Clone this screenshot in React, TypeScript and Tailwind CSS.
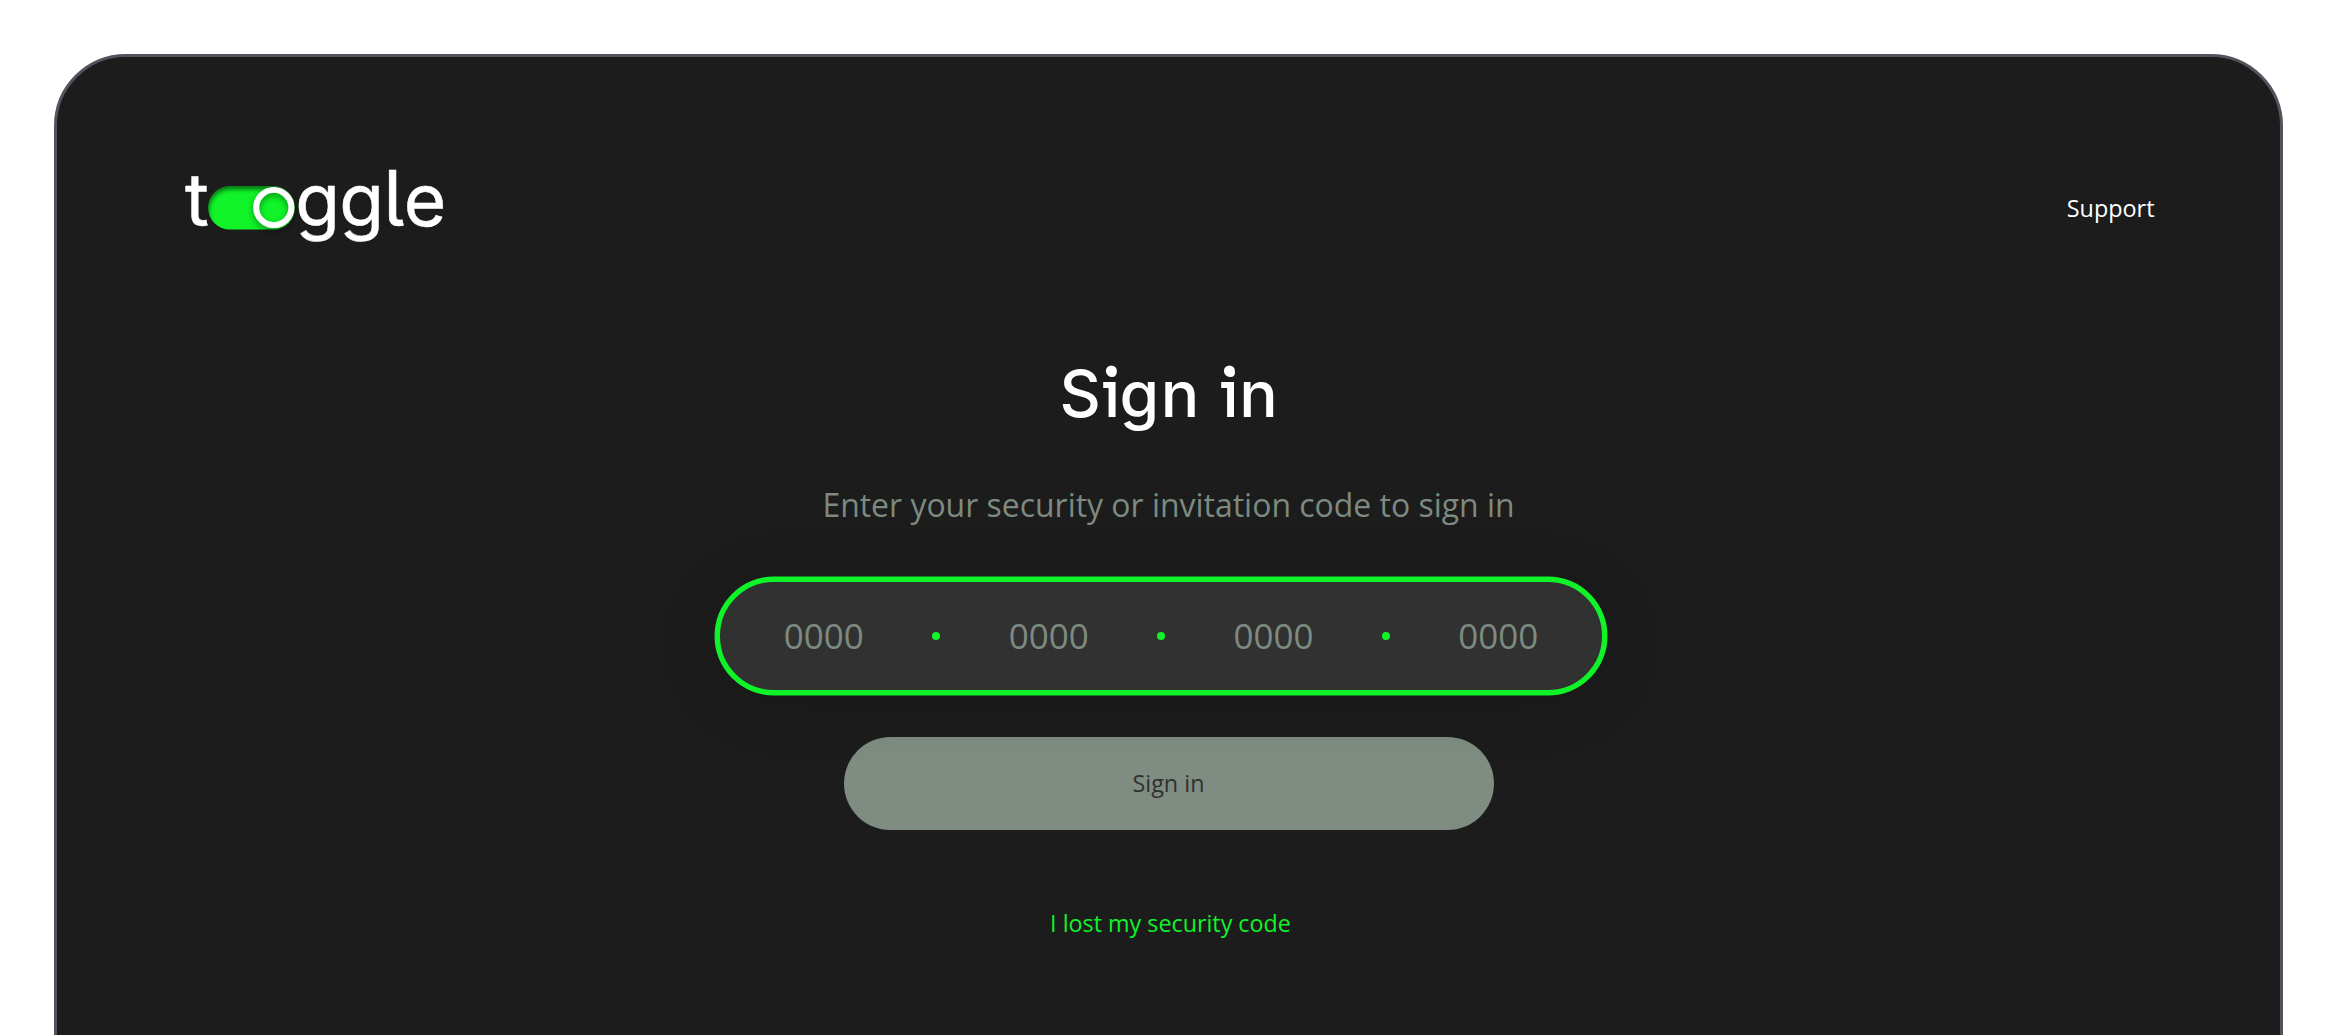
import React, { Fragment } from 'react';

const groups = ['0000', '0000', '0000', '0000'];

const Logo = () => {
  return (
    <svg width="270" height="96" viewBox="180 162 270 96" fill="none" className="block overflow-visible">
      <defs>
        <clipPath id="track">
          <rect x="208.2" y="186" width="86.8" height="43.6" rx="21.8" />
        </clipPath>
        <filter id="soft" x="-20%" y="-20%" width="140%" height="140%">
          <feGaussianBlur stdDeviation="2" />
        </filter>
        <filter id="knob" x="-40%" y="-40%" width="180%" height="180%">
          <feDropShadow dx="0" dy="3" stdDeviation="3" floodColor="#000" floodOpacity="0.4" />
        </filter>
      </defs>

      {/* Switch track with inner shadow */}
      <g clipPath="url(#track)">
        <rect x="208" y="186" width="88" height="44" fill="#0ff328" />
        <rect x="204.5" y="185" width="94" height="56" rx="26" stroke="#000" strokeOpacity="0.5" strokeWidth="9" filter="url(#soft)" />
      </g>
      <circle cx="273.8" cy="207.5" r="17.6" stroke="#fff" strokeWidth="5.9" filter="url(#knob)" />

      <g fill="#fff" stroke="#fff" strokeWidth="0.5" fontSize="73" className="font-['Inter',sans-serif] [font-feature-settings:'cv05'_1]">
        <text x="185" y="226.2">t</text>
        <text x="295.2 339.2" y="226.2">gg</text>
        <text x="383.2" y="226.2" fontSize="77">l</text>
        <text x="403.8" y="226.2">e</text>
      </g>
    </svg>
  );
};

const Title = () => {
  return (
    <h1>
      <svg width="237" height="90" viewBox="1050 350 237 90" fill="#fff" className="block overflow-visible">
        <text
          x="1059.4 1104.1 1119.6 1160.7 1200 1222.5 1239.2"
          y="416.7"
          fontSize="64"
          className="font-medium font-['Inter',sans-serif]"
        >
          Sign in
        </text>
        {/* Letter details: round dots and left spurs on both i's */}
        <circle cx="1111.4" cy="371" r="5.5" />
        <circle cx="1229.4" cy="371" r="5.5" />
        <rect x="1103.2" y="382" width="8" height="6" />
        <rect x="1221.2" y="382" width="8" height="6" />
      </svg>
    </h1>
  );
};

const App = () => {
  return (
    <div className="h-[1035px] w-full overflow-hidden bg-white px-[54px] pt-[54px] font-['Open_Sans',sans-serif]">
      <div className="h-[1100px] rounded-t-[72px] border-[3px] border-[#53535e] bg-[#1c1c1c]">
        <header className="flex items-start justify-between pl-[123px] pr-[125.5px] pt-[105px]">
          <Logo />
          <a href="#" className="mt-[26px] text-[23.4px] leading-[40px] text-white">
            Support
          </a>
        </header>

        <main className="flex flex-col items-center pt-[92px]">
          <Title />
          <p className="mt-[41px] text-[31.95px] leading-[48px] text-[#7c8a80]">
            Enter your security or invitation code to sign in
          </p>

          {/* Code field */}
          <div className="relative z-10 mt-[47.5px] mr-[15px] flex h-[118px] w-[892px] items-center gap-[68.4px] rounded-full border-[5px] border-[#0ff328] bg-[#313131] pl-[63.8px] shadow-[0_0_0_0.5px_#0ff328,0_8px_60px_rgba(0,0,0,0.16)]">
            {groups.map((group, i) => (
              <Fragment key={i}>
                {i > 0 && <span className="size-2 shrink-0 rounded-full bg-[#0ff328]" />}
                <span className="text-[35px] leading-[48px] text-[#7c8a80]">{group}</span>
              </Fragment>
            ))}
          </div>

          <button className="mt-[42.5px] h-[93px] w-[650px] rounded-full bg-[#7e8c82] text-[23.4px] text-[#313131]">
            Sign in
          </button>
          <a href="#" className="mt-[72.5px] pl-[4px] text-[23.3px] leading-[40px] text-[#0ff328]">
            I lost my security code
          </a>
        </main>
      </div>
    </div>
  );
};

export default App;
